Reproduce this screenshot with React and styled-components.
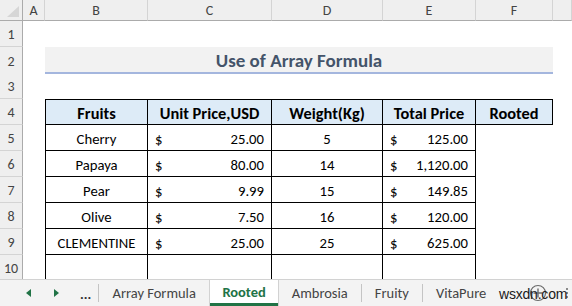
import React from 'react';
import styled, { createGlobalStyle } from 'styled-components';

const GlobalStyle = createGlobalStyle`
  html, body {
    margin: 0;
    padding: 0;
    background: #ffffff;
  }
  body {
    font-family: Carlito, Lato, "Liberation Sans", sans-serif;
  }
`;

const COLS = '23px 22px 103px 124px 111px 93px 77px 1fr';

const Window = styled.div`
  width: 572px;
  height: 306px;
  display: flex;
  flex-direction: column;
  overflow: hidden;
  position: relative;
  background: #ffffff;
`;

const Sheet = styled.div`
  flex: 1;
  overflow: hidden;
  display: flex;
  flex-direction: column;
`;

const Row = styled.div`
  display: grid;
  grid-template-columns: ${COLS};
  height: ${p => p.$h || 26}px;
  flex-shrink: 0;
`;

const Corner = styled.div`
  background: #efefef;
  border-right: 1px solid #ababab;
  border-bottom: 1px solid #ababab;
  box-sizing: border-box;
  display: flex;
  align-items: flex-end;
  justify-content: flex-end;
  padding: 0 3px 3px 0;
`;

const ColHead = styled.div`
  background: #efefef;
  border-right: 1px solid #d4d4d4;
  border-bottom: 1px solid #ababab;
  box-sizing: border-box;
  display: flex;
  align-items: center;
  justify-content: center;
  padding-top: 1px;
  font-size: 14px;
  color: #444444;
`;

const RowHead = styled.div`
  background: #efefef;
  border-right: 1px solid #ababab;
  border-bottom: 1px solid #d4d4d4;
  box-sizing: border-box;
  display: flex;
  align-items: center;
  justify-content: center;
  padding-top: 2px;
  font-size: 14px;
  color: #444444;
`;

const Blank = styled.div``;

const Title = styled.div`
  grid-column: 3 / 8;
  background: #f2f2f2;
  border-bottom: 2px solid #a4b6de;
  box-sizing: border-box;
  display: flex;
  align-items: center;
  justify-content: center;
  padding-top: 2px;
  font-size: 19px;
  font-weight: 700;
  color: #44546a;
`;

const Cell = styled.div`
  box-sizing: border-box;
  border-right: 1px solid #000000;
  border-bottom: 1px solid #000000;
  border-left: ${p => (p.$first ? '1px solid #000000' : 'none')};
  border-top: ${p => (p.$top ? '1px solid #000000' : 'none')};
  background: ${p => (p.$head ? '#ddebf7' : '#ffffff')};
  font-weight: ${p => (p.$head ? 700 : 400)};
  font-size: ${p => (p.$head ? 16.4 : 14.7)}px;
  color: #000000;
  display: flex;
  align-items: center;
  justify-content: ${p => (p.$money ? 'space-between' : 'center')};
  padding: ${p => (p.$money ? '2px 7px 0 7px' : '2px 0 0 0')};
  white-space: nowrap;
`;

const TabBar = styled.div`
  height: 27px;
  flex-shrink: 0;
  background: #f3f3f3;
  border-top: 1px solid #d2d2d2;
  box-sizing: border-box;
  display: flex;
  align-items: stretch;
  padding-left: 24px;
  font-size: 14.5px;
  color: #444444;
  white-space: nowrap;
  overflow: hidden;
  & > * {
    flex-shrink: 0;
  }
`;

const NavButton = styled.div`
  width: 28px;
  display: flex;
  align-items: center;
  padding-left: 2px;
  box-sizing: border-box;
`;

const Dots = styled.div`
  width: 18px;
  display: flex;
  align-items: center;
  justify-content: flex-start;
  font-size: 14px;
  font-weight: 700;
  color: #333333;
  padding-top: 3px;
`;

const Sep = styled.div`
  width: 1px;
  margin: 4px 0 4px;
  background: #c4c4c4;
`;

const Tab = styled.div`
  display: flex;
  align-items: center;
  padding: 0 ${p => p.$pad || 13}px 1px;
  margin-top: ${p => (p.$active ? -1 : 0)}px;
  background: ${p => (p.$active ? '#ffffff' : 'transparent')};
  color: ${p => (p.$active ? '#217346' : '#444444')};
  font-weight: ${p => (p.$active ? 700 : 400)};
  border-left: ${p => (p.$active ? '1px solid #d2d2d2' : 'none')};
  border-right: ${p => (p.$active ? '1px solid #d2d2d2' : 'none')};
  box-shadow: ${p => (p.$active ? 'inset 0 -3px 0 #217346' : 'none')};
`;

const AddButton = styled.div`
  margin-left: 30px;
  display: flex;
  align-items: center;
`;

const MoreDots = styled.div`
  margin-left: auto;
  margin-right: 4px;
  display: flex;
  flex-direction: column;
  justify-content: center;
  gap: 2px;
  span {
    width: 2px;
    height: 2px;
    background: #8a8a8a;
  }
`;

const Watermark = styled.div`
  position: absolute;
  left: 499px;
  top: 286px;
  font-family: "Liberation Sans", sans-serif;
  font-size: 14px;
  color: #1a1a1a;
  letter-spacing: -0.2px;
`;

const Triangle = ({ dir }) => (
  <svg width="5" height="8" viewBox="0 0 5 8">
    <path d={dir === 'left' ? 'M5 0 L0 4 L5 8 Z' : 'M0 0 L5 4 L0 8 Z'} fill="#217346" />
  </svg>
);

const cols = ['A', 'B', 'C', 'D', 'E', 'F', ''];

const fruits = [
  ['Cherry', '25.00', '5', '125.00'],
  ['Papaya', '80.00', '14', '1,120.00'],
  ['Pear', '9.99', '15', '149.85'],
  ['Olive', '7.50', '16', '120.00'],
  ['CLEMENTINE', '25.00', '25', '625.00'],
];

const Money = ({ value }) => (
  <>
    <span>$</span>
    <span>{value}</span>
  </>
);

export default function App() {
  return (
    <Window>
      <GlobalStyle />
      <Sheet>
        <Row $h={21}>
          <Corner>
            <svg width="12" height="11" viewBox="0 0 12 11">
              <path d="M12 0 L12 11 L0 11 Z" fill="#d6d6d6" />
            </svg>
          </Corner>
          {cols.map((c, i) => (
            <ColHead key={i}>{c}</ColHead>
          ))}
        </Row>

        <Row>
          <RowHead>1</RowHead>
        </Row>

        <Row>
          <RowHead>2</RowHead>
          <Blank />
          <Title>Use of Array Formula</Title>
        </Row>

        <Row>
          <RowHead>3</RowHead>
        </Row>

        <Row>
          <RowHead>4</RowHead>
          <Blank />
          <Cell $head $top $first>Fruits</Cell>
          <Cell $head $top>Unit Price,USD</Cell>
          <Cell $head $top>Weight(Kg)</Cell>
          <Cell $head $top>Total Price</Cell>
          <Cell $head $top>Rooted</Cell>
        </Row>

        {fruits.map(([name, price, weight, total], i) => (
          <Row key={name}>
            <RowHead>{i + 5}</RowHead>
            <Blank />
            <Cell $first>{name}</Cell>
            <Cell $money><Money value={price} /></Cell>
            <Cell>{weight}</Cell>
            <Cell $money><Money value={total} /></Cell>
          </Row>
        ))}

        <Row>
          <RowHead>10</RowHead>
          <Blank />
          <Cell $first />
          <Cell />
          <Cell />
          <Cell />
        </Row>
      </Sheet>

      <TabBar>
        <NavButton><Triangle dir="left" /></NavButton>
        <NavButton><Triangle dir="right" /></NavButton>
        <Dots>...</Dots>
        <Sep />
        <Tab $pad={13.5}>Array Formula</Tab>
        <Tab $active $pad={12}>Rooted</Tab>
        <Tab>Ambrosia</Tab>
        <Sep />
        <Tab>Fruity</Tab>
        <Sep />
        <Tab>VitaPure</Tab>
        <AddButton>
          <svg width="18" height="18" viewBox="0 0 18 18">
            <circle cx="9" cy="9" r="7.5" fill="none" stroke="#6b6b6b" strokeWidth="1.2" />
            <path d="M9 4.5 V13.5 M4.5 9 H13.5" stroke="#6b6b6b" strokeWidth="1.4" />
          </svg>
        </AddButton>
        <MoreDots>
          <span />
          <span />
          <span />
        </MoreDots>
      </TabBar>
      <Watermark>wsxdn.com</Watermark>
    </Window>
  );
}
